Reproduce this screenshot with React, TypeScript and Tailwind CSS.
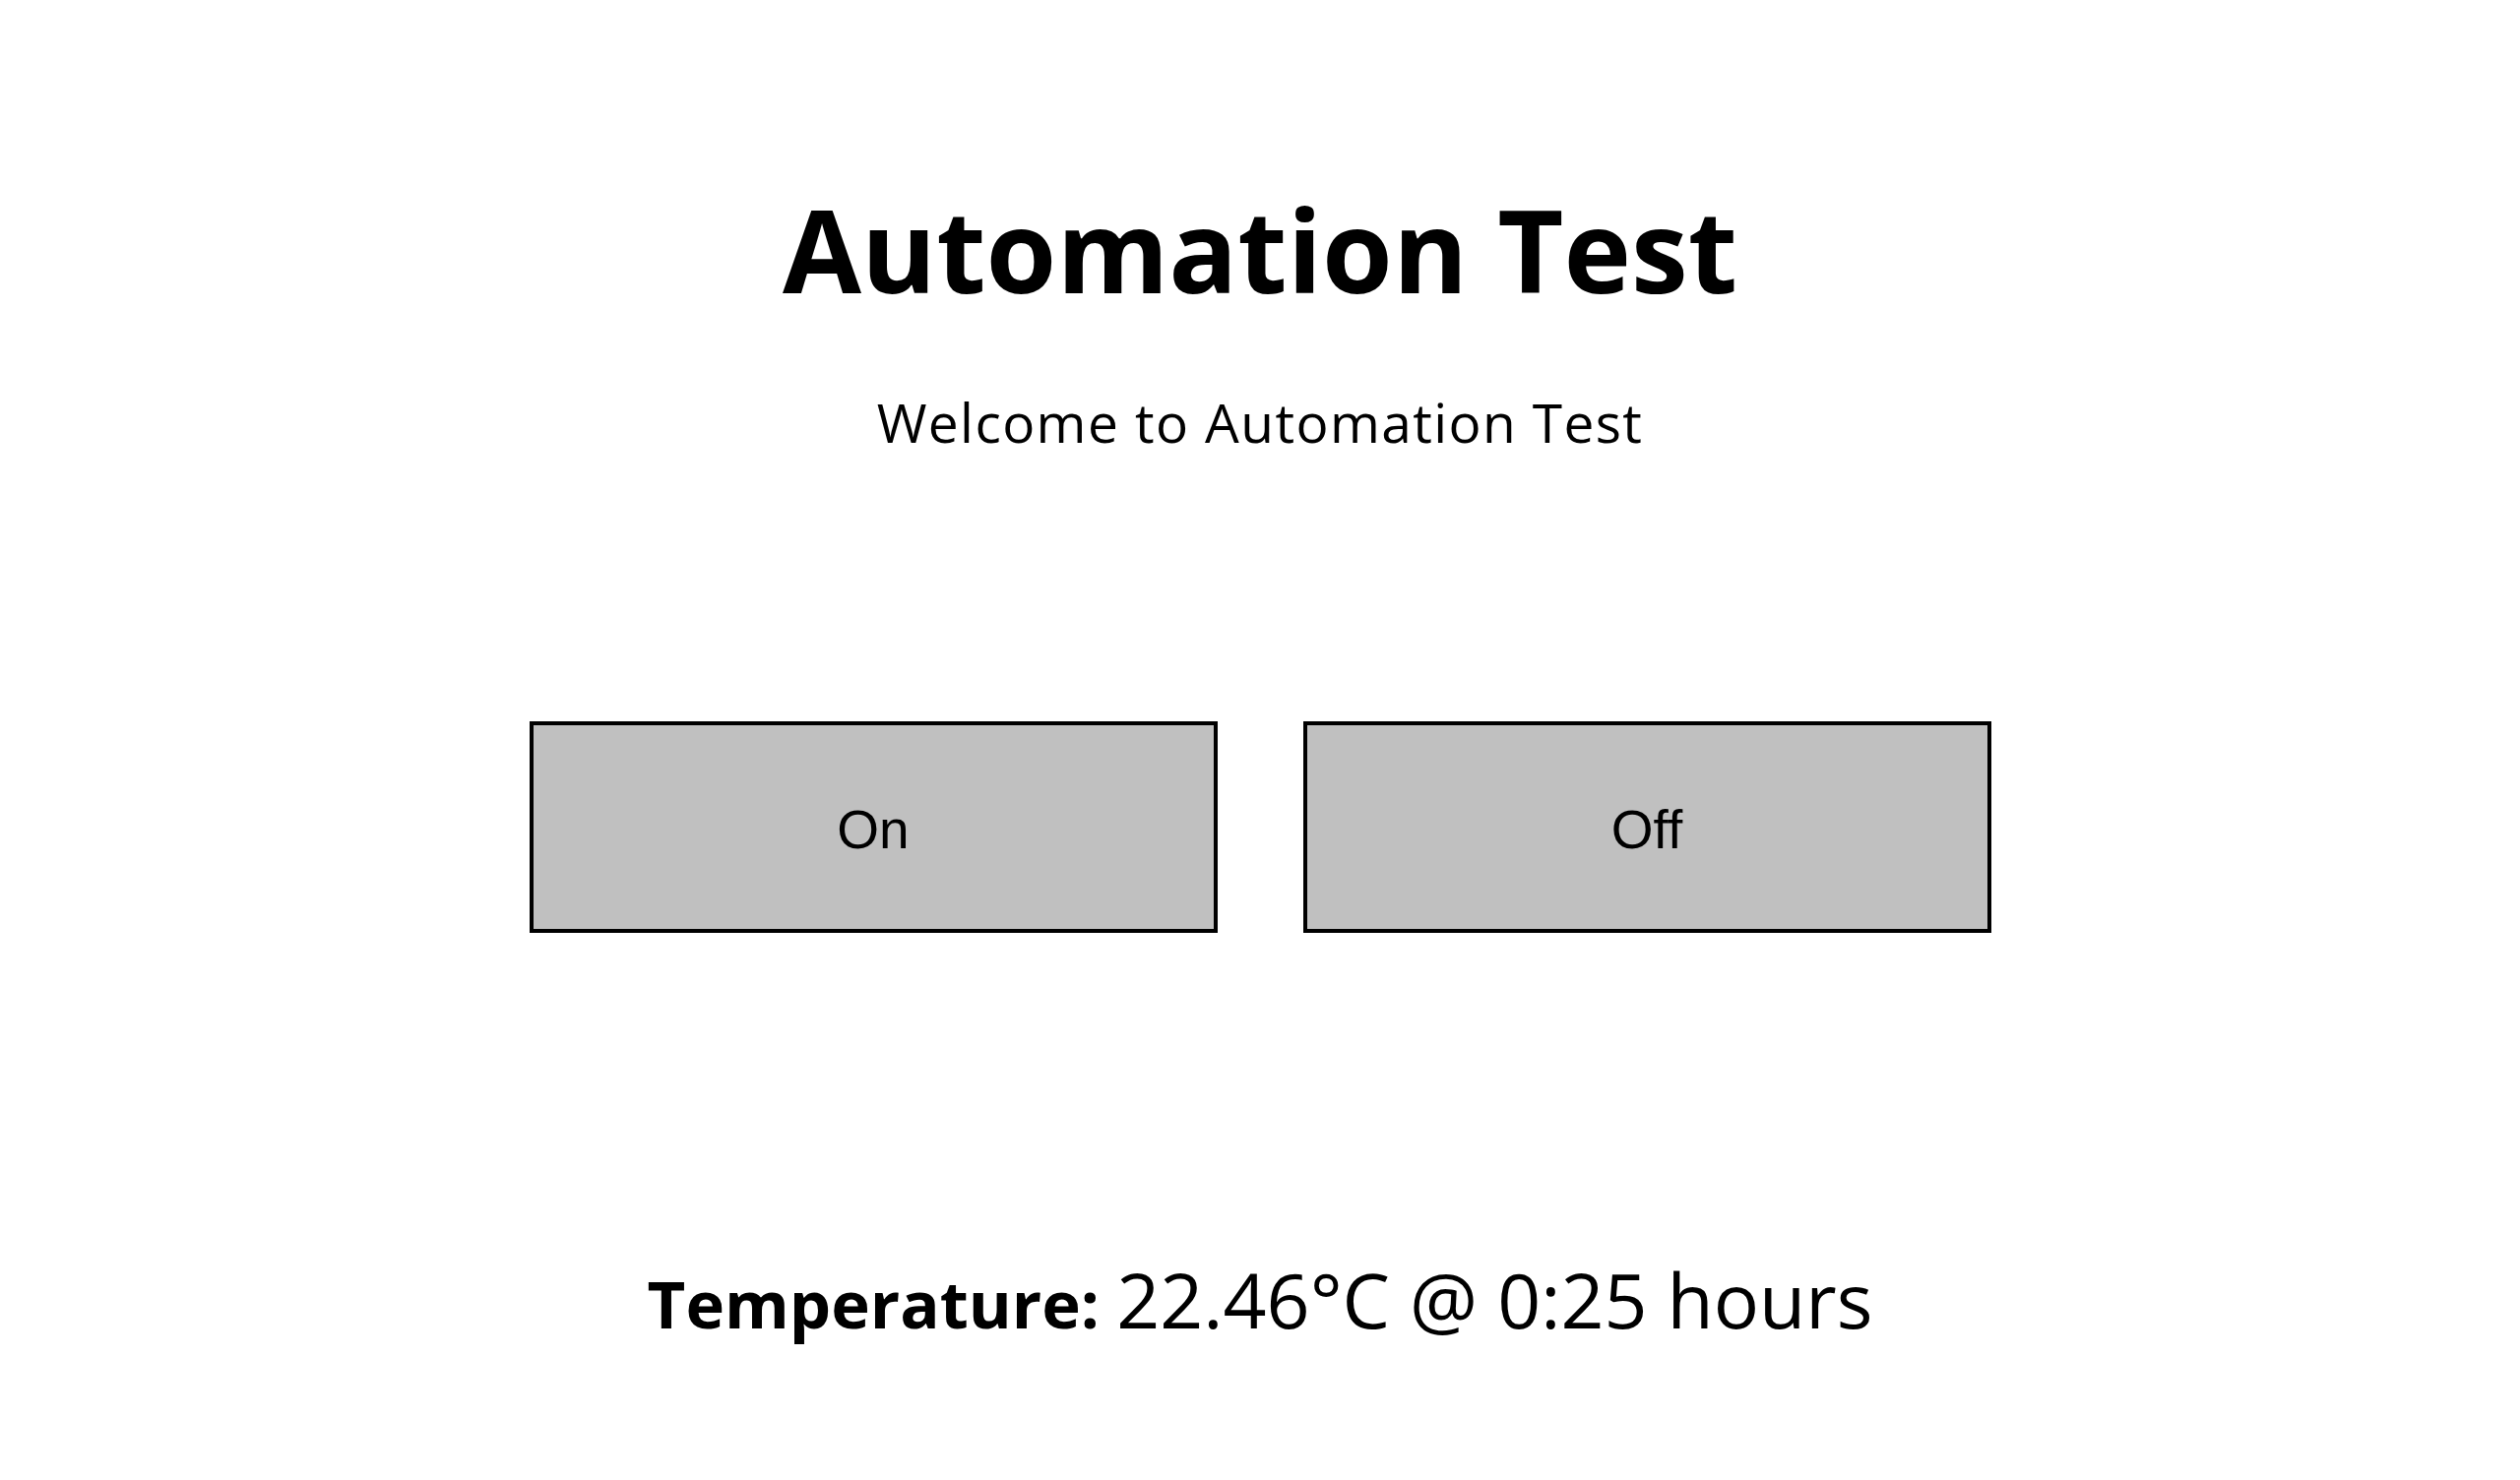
export default function App() {
  const sans = "font-['Open_Sans',sans-serif]";
  const btn =
    "w-[699px] h-[215px] pt-[6px] bg-[#c0c0c0] border-4 border-black font-['Liberation_Sans',Arial,sans-serif] text-[55px] leading-none text-black [font-variant-ligatures:none]";

  return (
    <div className={`min-h-screen w-full bg-white text-black ${sans} flex flex-col items-center pt-[195px]`}>
      <h1 className="text-[116px] leading-none font-bold">Automation Test</h1>
      <p className="mt-[90px] text-[55px] leading-none tracking-[1.4px]">Welcome to Automation Test</p>

      <div className="mt-[277px] flex gap-[87px]">
        <button className={btn}>On</button>
        <button className={btn}>Off</button>
      </div>

      <p className="mt-[334px] text-[77px] leading-none">
        <span className="text-[67px] font-bold">Temperature: </span>
        22.46°C @ 0:25 hours
      </p>
    </div>
  );
}
